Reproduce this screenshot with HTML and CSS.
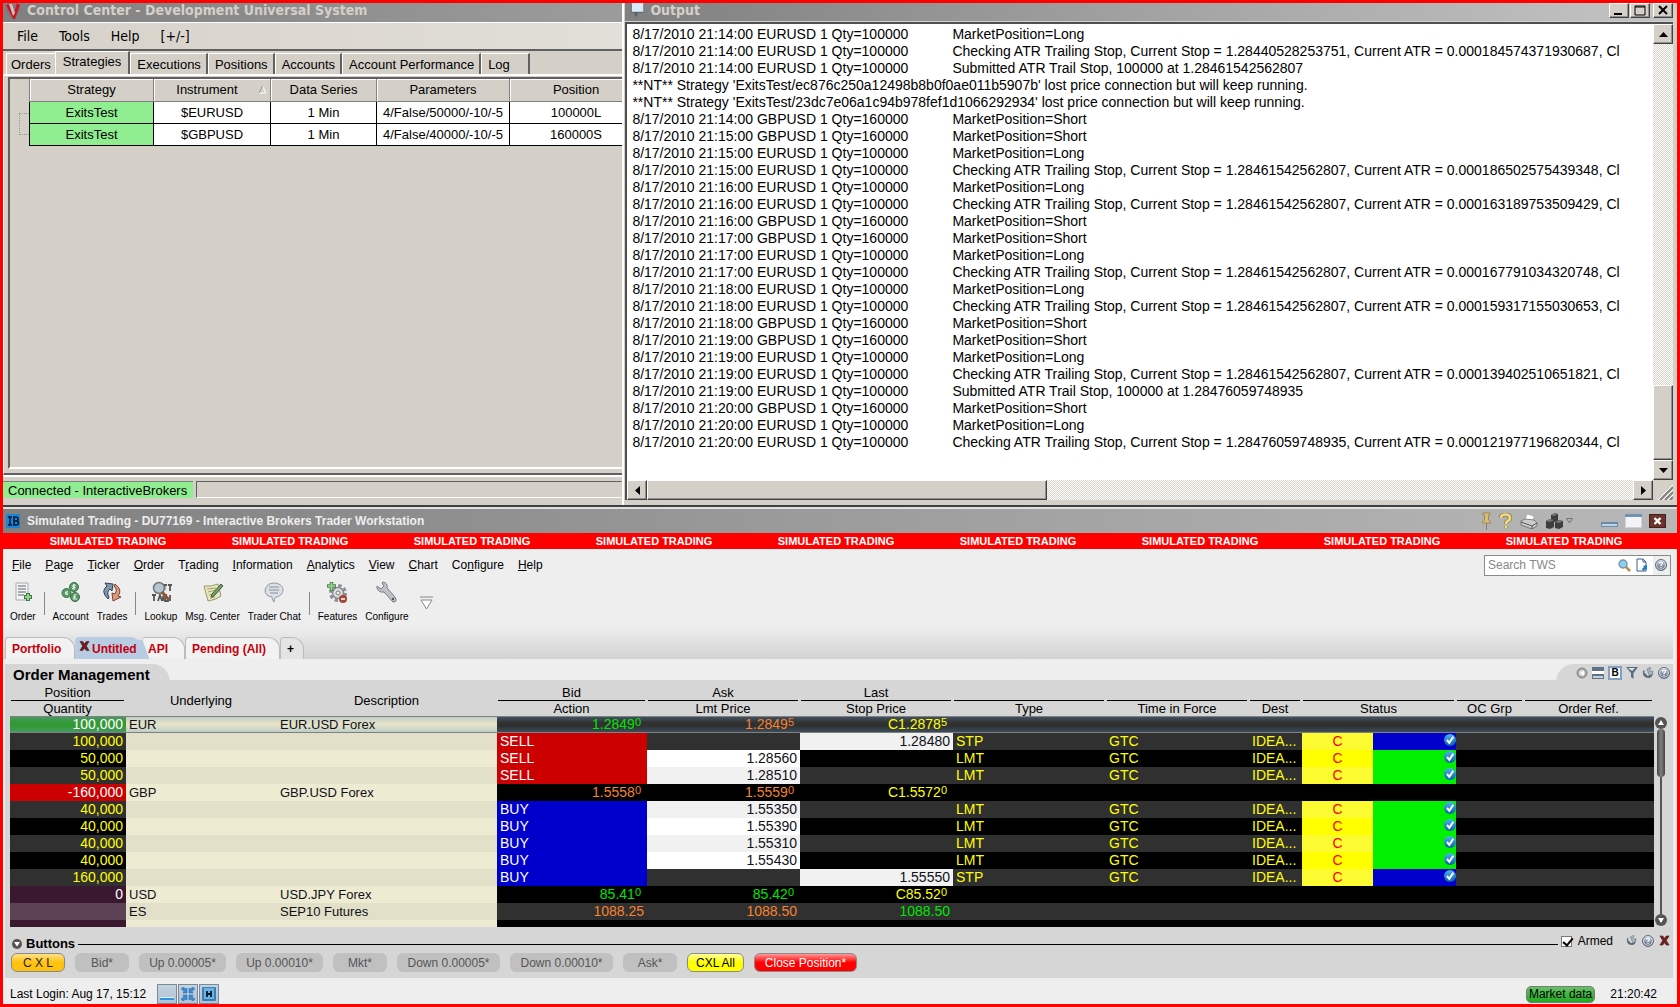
FILE: index.html
```html
<!DOCTYPE html>
<html lang="en">
<head>
  <meta charset="UTF-8">
  <title>Trading Desktop</title>
  <link rel="stylesheet" href="styles.css">
</head>
<body>

  <!-- Shared icons -->
  <svg class="sprite" aria-hidden="true">
    <defs>
      <linearGradient id="checkFill" x1="0" y1="0" x2="0" y2="1"><stop offset="0" stop-color="#4bb4ee"/><stop offset="1" stop-color="#0a5fae"/></linearGradient>
      <linearGradient id="steel" x1="0" y1="0" x2="0" y2="1"><stop offset="0" stop-color="#c6d0da"/><stop offset="1" stop-color="#5d6d80"/></linearGradient>
    </defs>
    <symbol id="check" viewBox="0 0 12 12"><circle cx="6" cy="6" r="6" fill="url(#checkFill)"/><path d="M3 6l2.3 2.8L9.3 2.8" fill="none" stroke="#fff" stroke-width="2"/></symbol>
    <symbol id="help" viewBox="0 0 12 12"><circle cx="6" cy="6" r="5.5" fill="url(#steel)" stroke="#5f6f80"/><circle cx="6" cy="6" r="4.4" fill="none" stroke="#e4eaf0" stroke-width=".7"/><path d="M4.500 4.800q0-1.600 1.500-1.600t1.500 1.400q0 .8-1.500 1.600v.8M6 8v1.300" fill="none" stroke="#fff" stroke-width="1.200"/></symbol>
    <symbol id="wrench" viewBox="0 0 12 12"><path d="M1 4q-1 6 5 7 5 0 5-6L9 8H7L2 3z" fill="#5d6a78"/><path d="M5 2q2-2 4-1L7.500 3l1 1.500L11 4q0 3-2 4-1 .5-2 0z" fill="#aab4be" stroke="#66717d" stroke-width=".6"/><path d="M2.500 4.500l4 4" stroke="#dfe5ea" stroke-width="1.600"/></symbol>
    <symbol id="cross" viewBox="0 0 12 12"><path d="M1 1h3l2 2.500L8 1h3L8 6l3 5H8L6 8.500 4 11H1l3-5z" fill="#6e1f1f" stroke="#4b1616" stroke-width=".6"/></symbol>
  </svg>

  <div class="desktop">

    <!-- Control Center -->
    <section class="control">
      <div class="titleBar">
        <svg width="18" height="16" viewBox="0 0 18 16"><path d="M1 3q3-3 8-3 6 0 7 5-2 9-7 10Q2 12 1 3z" fill="#8b7376"/><path d="M2 2l4-1 4 9 3-10 3 2-5 14H9z" fill="#c81724"/><path d="M5 1h3l3 9-2 3z" fill="#c9c5c5"/></svg>
        <span>Control Center - Development Universal System</span>
      </div>
      <nav class="ccMenu">
        <button>File</button><button>Tools</button><button>Help</button><button>[+/-]</button>
      </nav>
      <div class="ccTabs">
        <button>Orders</button><button class="active">Strategies</button><button>Executions</button><button>Positions</button><button>Accounts</button><button>Account Performance</button><button class="log">Log</button>
      </div>
      <div class="ccPage">
        <div class="ccFrame">
          <div class="tree"></div>
          <table class="strategies">
            <colgroup><col class="w124"><col class="w117"><col class="w106"><col class="w133"><col class="w133"></colgroup>
            <tr><th>Strategy</th><th class="sorted">Instrument<svg class="sort" width="9" height="9" viewBox="0 0 9 9"><path d="M4.500 1L1 8h7z" fill="none" stroke="#fff"/><path d="M4.500 1L1 8" stroke="#888"/></svg></th><th>Data Series</th><th>Parameters</th><th>Position</th></tr>
            <tr><td class="run">ExitsTest</td><td>$EURUSD</td><td>1 Min</td><td>4/False/50000/-10/-5</td><td>100000L</td></tr>
            <tr><td class="run">ExitsTest</td><td>$GBPUSD</td><td>1 Min</td><td>4/False/40000/-10/-5</td><td>160000S</td></tr>
          </table>
        </div>
      </div>
      <div class="ccStatus">
        <span class="connected">Connected - InteractiveBrokers</span>
        <span class="empty"></span>
      </div>
    </section>

    <!-- Output window -->
    <section class="output">
      <div class="titleBar">
        <svg width="15" height="15" viewBox="0 0 17 17"><path d="M1 1h14v10H9l-2 5-2-2V11H1z" fill="#56616f"/><path d="M2 0h13v10H2z" fill="#dbe8f6"/></svg>
        <span>Output</span>
        <div class="winButtons">
          <button aria-label="Minimize"><svg width="12" height="11" viewBox="0 0 12 11"><path d="M1 8h8v2H1z"/></svg></button>
          <button aria-label="Maximize"><svg width="12" height="11" viewBox="0 0 12 11"><path d="M1 1h10v9H1zM1 2h10" fill="none" stroke="#000"/></svg></button>
          <button class="close" aria-label="Close"><svg width="12" height="11" viewBox="0 0 12 11"><path d="M2 1l8 8M10 1l-8 8" stroke="#000" stroke-width="2"/></svg></button>
        </div>
      </div>
      <div class="outBody">
<pre class="logText">8/17/2010 21:14:00 EURUSD 1 Qty=100000	MarketPosition=Long
8/17/2010 21:14:00 EURUSD 1 Qty=100000	Checking ATR Trailing Stop, Current Stop = 1.28440528253751, Current ATR = 0.000184574371930687, Cl
8/17/2010 21:14:00 EURUSD 1 Qty=100000	Submitted ATR Trail Stop, 100000 at 1.28461542562807
**NT** Strategy 'ExitsTest/ec876c250a12498b8b0f0ae011b5907b' lost price connection but will keep running.
**NT** Strategy 'ExitsTest/23dc7e06a1c94b978fef1d1066292934' lost price connection but will keep running.
8/17/2010 21:14:00 GBPUSD 1 Qty=160000	MarketPosition=Short
8/17/2010 21:15:00 GBPUSD 1 Qty=160000	MarketPosition=Short
8/17/2010 21:15:00 EURUSD 1 Qty=100000	MarketPosition=Long
8/17/2010 21:15:00 EURUSD 1 Qty=100000	Checking ATR Trailing Stop, Current Stop = 1.28461542562807, Current ATR = 0.000186502575439348, Cl
8/17/2010 21:16:00 EURUSD 1 Qty=100000	MarketPosition=Long
8/17/2010 21:16:00 EURUSD 1 Qty=100000	Checking ATR Trailing Stop, Current Stop = 1.28461542562807, Current ATR = 0.000163189753509429, Cl
8/17/2010 21:16:00 GBPUSD 1 Qty=160000	MarketPosition=Short
8/17/2010 21:17:00 GBPUSD 1 Qty=160000	MarketPosition=Short
8/17/2010 21:17:00 EURUSD 1 Qty=100000	MarketPosition=Long
8/17/2010 21:17:00 EURUSD 1 Qty=100000	Checking ATR Trailing Stop, Current Stop = 1.28461542562807, Current ATR = 0.000167791034320748, Cl
8/17/2010 21:18:00 EURUSD 1 Qty=100000	MarketPosition=Long
8/17/2010 21:18:00 EURUSD 1 Qty=100000	Checking ATR Trailing Stop, Current Stop = 1.28461542562807, Current ATR = 0.000159317155030653, Cl
8/17/2010 21:18:00 GBPUSD 1 Qty=160000	MarketPosition=Short
8/17/2010 21:19:00 GBPUSD 1 Qty=160000	MarketPosition=Short
8/17/2010 21:19:00 EURUSD 1 Qty=100000	MarketPosition=Long
8/17/2010 21:19:00 EURUSD 1 Qty=100000	Checking ATR Trailing Stop, Current Stop = 1.28461542562807, Current ATR = 0.000139402510651821, Cl
8/17/2010 21:19:00 EURUSD 1 Qty=100000	Submitted ATR Trail Stop, 100000 at 1.28476059748935
8/17/2010 21:20:00 GBPUSD 1 Qty=160000	MarketPosition=Short
8/17/2010 21:20:00 EURUSD 1 Qty=100000	MarketPosition=Long
8/17/2010 21:20:00 EURUSD 1 Qty=100000	Checking ATR Trailing Stop, Current Stop = 1.28476059748935, Current ATR = 0.000121977196820344, Cl</pre>
        <div class="vScroll">
          <button aria-label="Scroll up"><svg width="9" height="5" viewBox="0 0 9 5"><path d="M0 5l4.500-5L9 5z"/></svg></button>
          <div class="thumb"></div>
          <button aria-label="Scroll down"><svg width="9" height="5" viewBox="0 0 9 5"><path d="M0 0h9L4.500 5z"/></svg></button>
        </div>
        <div class="hScroll">
          <button aria-label="Scroll left"><svg width="5" height="9" viewBox="0 0 5 9"><path d="M5 0v9L0 4.500z"/></svg></button>
          <div class="thumb"></div>
          <button class="last" aria-label="Scroll right"><svg width="5" height="9" viewBox="0 0 5 9"><path d="M0 0v9l5-4.500z"/></svg></button>
        </div>
        <div class="grip"><svg width="15" height="15" viewBox="0 0 15 15"><path d="M2 15L15 2M7 15l8-8M12 15l3-3" stroke="#808080" stroke-width="2"/><path d="M0 15L15 0M5 15L15 5M10 15l5-5" stroke="#fff"/></svg></div>
      </div>
    </section>
  </div>

  <!-- Trader Workstation -->
  <main class="tws">
    <div class="twsTitle">
      <svg width="14" height="14" viewBox="0 0 14 14"><rect width="14" height="14" fill="#1b86d8"/><path d="M2 3h4M4 3v8M2 11h4M8 3v8M7 3h3q2 0 2 2t-2 2H8M10 7q2.500 0 2.500 2T10 11H7" fill="none" stroke="#04162e" stroke-width="1.500"/></svg>
      <span>Simulated Trading - DU77169 - Interactive Brokers Trader Workstation</span>
      <div class="twsTools">
        <svg width="9" height="18" viewBox="0 0 9 18"><path d="M1 1h7v2H6.500v5L8.500 10v1H.5v-1l2-2V3H1z" fill="#d8bd72" stroke="#8f7a45" stroke-width=".7"/><path d="M4.500 11v7" stroke="#877f70"/></svg>
        <svg width="13" height="16" viewBox="0 0 13 16"><path d="M2 5q0-3.500 4.500-3.500T11 5q0 2-2.300 3-1.700.8-1.700 3M7 13v2.500" fill="none" stroke="#8c7c3d" stroke-width="4"/><path d="M2 5q0-3.500 4.500-3.500T11 5q0 2-2.300 3-1.700.8-1.700 3M7 13v2.500" fill="none" stroke="#eedc86" stroke-width="2.600"/></svg>
        <svg width="18" height="16" viewBox="0 0 18 16"><path d="M5 7l2-6 7 2-1 5z" fill="#fff" stroke="#999" stroke-width=".6"/><path d="M1 8l4-2 9 1 3 3v3l-5 3-11-4z" fill="#ccc" stroke="#666" stroke-width=".8"/><path d="M1 9l11 4 5-3M12 13v3" fill="none" stroke="#555"/></svg>
        <svg width="17" height="17" viewBox="0 0 17 17"><path d="M5 2l4-2 3 1v7l-4 1-3-1zM0 8l4-2 4 1v7l-4 2-4-1zM9 9l4-2 4 1v6l-4 2-4-1z" fill="#3e3e3e"/><path d="M5 2l3 1 4-2-3-1zM0 8l4 1 4-2-4-1zM9 9l4 1 4-2-4-1z" fill="#777"/></svg>
        <svg class="drop" width="7" height="6" viewBox="0 0 7 6"><path d="M.5.5h6L3.500 5z" fill="none" stroke="#777"/></svg>
      </div>
      <div class="twsWin">
        <button aria-label="Minimize"><svg width="17" height="16" viewBox="0 0 17 16"><rect y="9" width="17" height="5" fill="#6d8ba9"/><rect x="1" y="11" width="15" height="2" fill="#b9d6ef"/></svg></button>
        <button aria-label="Restore"><svg width="17" height="16" viewBox="0 0 17 16"><rect x=".5" y="1.500" width="16" height="13" fill="#f4f4f4" stroke="#c9d3dd"/><rect y="1" width="17" height="3" fill="#6f93b5"/></svg></button>
        <button aria-label="Close"><svg width="17" height="16" viewBox="0 0 17 16"><rect x=".5" y="1.500" width="16" height="13" fill="#6b332b" stroke="#46201b"/><path d="M5.500 5l6 6M11.500 5l-6 6" stroke="#fff" stroke-width="2.400"/></svg></button>
      </div>
    </div>

    <div class="simStrip">
      <span>SIMULATED TRADING</span><span>SIMULATED TRADING</span><span>SIMULATED TRADING</span><span>SIMULATED TRADING</span><span>SIMULATED TRADING</span><span>SIMULATED TRADING</span><span>SIMULATED TRADING</span><span>SIMULATED TRADING</span><span>SIMULATED TRADING</span>
    </div>

    <div class="menuRow">
      <nav class="twsMenu">
        <button><u>F</u>ile</button><button><u>P</u>age</button><button><u>T</u>icker</button><button><u>O</u>rder</button><button>T<u>r</u>ading</button><button><u>I</u>nformation</button><button><u>A</u>nalytics</button><button><u>V</u>iew</button><button><u>C</u>hart</button><button>Co<u>n</u>figure</button><button><u>H</u>elp</button>
      </nav>
      <div class="search">
        <input type="text" placeholder="Search TWS" aria-label="Search TWS">
        <svg width="13" height="13" viewBox="0 0 13 13"><path d="M7 7l5 5" stroke="#c58a4a" stroke-width="2.500"/><circle cx="5" cy="5" r="4" fill="#8ccdf0" stroke="#7893a8" stroke-width="1.300"/></svg>
        <svg width="12" height="14" viewBox="0 0 12 14"><path d="M1 1h6l3 3v9H1z" fill="#fff" stroke="#3b5d92"/><path d="M7 1v3h3" fill="none" stroke="#3b5d92"/><path d="M7 8l4-1v5l-1-1-3 2-1-2 2-2z" fill="#1f78c8"/></svg>
        <span class="searchHelp"><svg width="12" height="12"><use href="#help"/></svg></span>
      </div>
    </div>

    <div class="toolbar">
      <button>
        <svg width="22" height="22" viewBox="0 0 22 22"><path d="M4 2h12v17H4z" fill="#f3f3f3" stroke="#aaa"/><path d="M6 5h8M6 8h8M6 11h8M6 14h6" stroke="#8d949a" stroke-width="1.500"/><path d="M12 16h8M16 12v8" stroke="#3b7a3f" stroke-width="4"/><path d="M13 16h6M16 13v6" stroke="#9cd49b" stroke-width="2"/></svg>
        Order</button>
      <i></i>
      <button>
        <svg width="22" height="22" viewBox="0 0 22 22"><g fill="#5a9a66" stroke="#3c6f48"><circle cx="14" cy="6" r="4.500"/><circle cx="6.500" cy="12" r="4.500"/><circle cx="15" cy="16" r="4.500"/></g><path d="M15.500 4.500q-2-1.500-2.500.2t1.500 1.500-2.500 1.500M14 3v6M8 10.500q-2.500 0-2.500 1.500T8 13.500M5 12h3M16.500 13.500q-2.500-.5-2 2.500l-.8 2h3.500M13 16h3" fill="none" stroke="#e3f1e4" stroke-width="1.100"/></svg>
        Account</button>
      <button>
        <svg width="22" height="22" viewBox="0 0 22 22"><path d="M7 18Q-1 10 6 5L4 2l8 1-1 7-2-2q-4 3-1 8z" fill="#8096ab" stroke="#2f4154" stroke-width="1"/><path d="M14 3q8 6 3 12l3 1-8 4-1-8 3 1q3-4-1-8z" fill="#dc9c7c" stroke="#7e4230" stroke-width="1"/></svg>
        Trades</button>
      <i></i>
      <button>
        <svg width="22" height="22" viewBox="0 0 22 22"><path d="M12 4h5M14.500 4v5M18 4h4M20 4v6M2 14h4M4 14v6M8 20l2-6 2 6M13 15v5M17 14h-2v6h3v-3M20 14v6" stroke="#555" stroke-width="1.800" fill="none"/><circle cx="9" cy="7" r="5.500" fill="#b7c3cd" stroke="#6a7680" stroke-width="1.500"/><path d="M12 11l7 8" stroke="#8e5637" stroke-width="3"/></svg>
        Lookup</button>
      <button>
        <svg width="22" height="22" viewBox="0 0 22 22"><path d="M2 5q7 1 14-2l3 12q-5 4-13 5z" fill="#e9e7b9" stroke="#9a9773"/><path d="M5 8l9-1M6 11l8-2M7 14l8-2M8 17l5-1" stroke="#a49b72"/><path d="M19 3l2 2-9 10-3 1 1-3z" fill="#6fa066" stroke="#4b5c47"/></svg>
        Msg. Center</button>
      <button>
        <svg width="22" height="22" viewBox="0 0 22 22"><path d="M11 2c5 0 9 3 9 7s-4 7-7 7q-2 1-2 5-2-2-2-5-7-1-7-7 2-7 9-7z" fill="#dcdfe5" stroke="#9297a3"/><path d="M6 6h10M6 9h10M7 12h8" stroke="#8c92a0" stroke-width="1.200"/></svg>
        Trader Chat</button>
      <i></i>
      <button>
        <svg width="22" height="22" viewBox="0 0 22 22"><circle cx="12" cy="12" r="7.500" fill="none" stroke="#8c8f96" stroke-width="3" stroke-dasharray="3.400 2.500"/><circle cx="12" cy="12" r="5.500" fill="#dcdde0" stroke="#888b92" stroke-width="1.500"/><circle cx="12" cy="12" r="2" fill="#f4f4f4" stroke="#777"/><path d="M1 5h9M5.500 1v9" stroke="#4c8a4f" stroke-width="3.600"/><path d="M2 5h7M5.500 2v7" stroke="#a3d5a0" stroke-width="1.600"/><circle cx="17" cy="18" r="4" fill="#a2473a"/><path d="M15 18h4" stroke="#fff" stroke-width="1.500"/></svg>
        Features</button>
      <button>
        <svg width="22" height="22" viewBox="0 0 22 22"><path d="M7 1q5 1 4 6l8 9q3 5-2 5L8 11Q3 12 1 7V5l4 3 3-3-2-3z" fill="#bfc3c9" stroke="#777c85"/><circle cx="17" cy="18" r="1.200" fill="#555"/></svg>
        Configure</button>
      <svg class="more" width="13" height="14" viewBox="0 0 13 14"><path d="M0 1h13" stroke="#888"/><path d="M1 4h11l-5.500 9z" fill="#fff" stroke="#888"/></svg>
    </div>

    <div class="pageTabs">
      <button class="first">Portfolio</button>
      <button class="current"><svg width="11" height="12" viewBox="0 0 12 12"><use href="#cross"/></svg>Untitled</button>
      <button class="api">API</button>
      <button class="pending">Pending (All)</button>
      <button class="add">+</button>
    </div>

    <section class="panel">
      <div class="panelHead">
        <h2>Order Management</h2>
        <div class="panelTools">
          <svg width="12" height="12" viewBox="0 0 12 12"><circle cx="6" cy="6" r="5" fill="#a5a5a5" stroke="#858585"/><circle cx="6" cy="6" r="3" fill="#ddd"/><path d="M4 6l4-2.500v5z" fill="#fff"/></svg>
          <svg width="12" height="12" viewBox="0 0 12 12"><path d="M0 0h12v12H0z" fill="#fff"/><path d="M0 0h12v4H0zM0 7h12v5H0z" fill="#5e7288"/><path d="M1 9h10v2H1z" fill="#c5d3e0"/></svg>
          <button class="bold">B</button>
          <svg width="12" height="12" viewBox="0 0 12 12"><path d="M0 0h12L7.500 6v6L5 10V6z" fill="#5a6c80"/><path d="M2 1h7L6 4z" fill="#d7e3ee"/></svg>
          <svg width="12" height="12"><use href="#wrench"/></svg>
          <svg width="12" height="12"><use href="#help"/></svg>
        </div>
      </div>

      <div class="orderArea">
        <table class="orders">
          <colgroup><col class="cQty"><col class="cUnd"><col class="cDesc"><col class="cBid"><col class="cPrice"><col class="cPrice"><col class="cPrice"><col class="cTif"><col class="cDest"><col class="cStat"><col class="cFill"><col class="cOc"><col></colgroup>
          <thead>
            <tr>
              <th><span>Position</span>Quantity</th>
              <th class="single">Underlying</th>
              <th class="single">Description</th>
              <th><span>Bid</span>Action</th>
              <th><span>Ask</span>Lmt Price</th>
              <th><span>Last</span>Stop Price</th>
              <th><span></span>Type</th>
              <th><span></span>Time in Force</th>
              <th><span></span>Dest</th>
              <th colspan="2"><span></span>Status</th>
              <th><span></span>OC Grp</th>
              <th><span></span>Order Ref.</th>
            </tr>
          </thead>
          <tbody>
            <tr class="selected"><td class="qty long">100,000</td><td class="name">EUR</td><td class="name">EUR.USD Forex</td><td class="num up">1.2849<sup>0</sup></td><td class="num down">1.2849<sup>5</sup></td><td class="num last">C1.2878<sup>5</sup></td><td></td><td></td><td></td><td></td><td></td><td></td><td></td></tr>
            <tr><td class="qty">100,000</td><td class="name"></td><td class="name"></td><td class="sell">SELL</td><td></td><td class="price">1.28480</td><td>STP</td><td>GTC</td><td>IDEA...</td><td class="cancel">C</td><td class="sent"><svg width="12" height="12"><use href="#check"/></svg></td><td></td><td></td></tr>
            <tr><td class="qty">50,000</td><td class="name"></td><td class="name"></td><td class="sell">SELL</td><td class="price">1.28560</td><td></td><td>LMT</td><td>GTC</td><td>IDEA...</td><td class="cancel">C</td><td class="working"><svg width="12" height="12"><use href="#check"/></svg></td><td></td><td></td></tr>
            <tr><td class="qty">50,000</td><td class="name"></td><td class="name"></td><td class="sell">SELL</td><td class="price">1.28510</td><td></td><td>LMT</td><td>GTC</td><td>IDEA...</td><td class="cancel">C</td><td class="working"><svg width="12" height="12"><use href="#check"/></svg></td><td></td><td></td></tr>
            <tr><td class="qty short">-160,000</td><td class="name">GBP</td><td class="name">GBP.USD Forex</td><td class="num down">1.5558<sup>0</sup></td><td class="num down">1.5559<sup>0</sup></td><td class="num last">C1.5572<sup>0</sup></td><td></td><td></td><td></td><td></td><td></td><td></td><td></td></tr>
            <tr><td class="qty">40,000</td><td class="name"></td><td class="name"></td><td class="buy">BUY</td><td class="price">1.55350</td><td></td><td>LMT</td><td>GTC</td><td>IDEA...</td><td class="cancel">C</td><td class="working"><svg width="12" height="12"><use href="#check"/></svg></td><td></td><td></td></tr>
            <tr><td class="qty">40,000</td><td class="name"></td><td class="name"></td><td class="buy">BUY</td><td class="price">1.55390</td><td></td><td>LMT</td><td>GTC</td><td>IDEA...</td><td class="cancel">C</td><td class="working"><svg width="12" height="12"><use href="#check"/></svg></td><td></td><td></td></tr>
            <tr><td class="qty">40,000</td><td class="name"></td><td class="name"></td><td class="buy">BUY</td><td class="price">1.55310</td><td></td><td>LMT</td><td>GTC</td><td>IDEA...</td><td class="cancel">C</td><td class="working"><svg width="12" height="12"><use href="#check"/></svg></td><td></td><td></td></tr>
            <tr><td class="qty">40,000</td><td class="name"></td><td class="name"></td><td class="buy">BUY</td><td class="price">1.55430</td><td></td><td>LMT</td><td>GTC</td><td>IDEA...</td><td class="cancel">C</td><td class="working"><svg width="12" height="12"><use href="#check"/></svg></td><td></td><td></td></tr>
            <tr><td class="qty">160,000</td><td class="name"></td><td class="name"></td><td class="buy">BUY</td><td></td><td class="price">1.55550</td><td>STP</td><td>GTC</td><td>IDEA...</td><td class="cancel">C</td><td class="sent"><svg width="12" height="12"><use href="#check"/></svg></td><td></td><td></td></tr>
            <tr><td class="qty flat">0</td><td class="name">USD</td><td class="name">USD.JPY Forex</td><td class="num up">85.41<sup>0</sup></td><td class="num up">85.42<sup>0</sup></td><td class="num last">C85.52<sup>0</sup></td><td></td><td></td><td></td><td></td><td></td><td></td><td></td></tr>
            <tr><td class="qty flat"></td><td class="name">ES</td><td class="name">SEP10 Futures</td><td class="num down">1088.25</td><td class="num down">1088.50</td><td class="num up">1088.50</td><td></td><td></td><td></td><td></td><td></td><td></td><td></td></tr>
            <tr class="cut"><td class="qty flat"></td><td class="name"></td><td class="name"></td><td></td><td></td><td></td><td></td><td></td><td></td><td></td><td></td><td></td><td></td></tr>
          </tbody>
        </table>
        <div class="orderScroll">
          <svg width="12" height="12" viewBox="0 0 12 12"><circle cx="6" cy="6" r="6" fill="#555"/><path d="M6 3l3 5H3z" fill="#fff"/></svg>
          <div class="track"><div class="thumb"></div></div>
          <svg width="12" height="12" viewBox="0 0 12 12"><circle cx="6" cy="6" r="6" fill="#555"/><path d="M6 9l3-5H3z" fill="#fff"/></svg>
        </div>
      </div>

      <div class="buttonsHead">
        <svg width="10" height="10" viewBox="0 0 10 10"><circle cx="5" cy="5" r="5" fill="#555"/><path d="M5 7.500L8 3H2z" fill="#fff"/></svg>
        <h3>Buttons</h3>
        <div class="rule"></div>
        <label for="armed"><input type="checkbox" id="armed" checked>Armed</label>
        <div class="headIcons">
          <svg width="11" height="11"><use href="#wrench"/></svg>
          <svg width="12" height="12"><use href="#help"/></svg>
          <svg width="11" height="11"><use href="#cross"/></svg>
        </div>
      </div>
      <div class="hotButtons">
        <button class="short cxl">C X L</button>
        <button class="short">Bid*</button>
        <button class="mid">Up 0.00005*</button>
        <button class="mid">Up 0.00010*</button>
        <button class="short">Mkt*</button>
        <button class="wide">Down 0.00005*</button>
        <button class="wide">Down 0.00010*</button>
        <button class="short">Ask*</button>
        <button class="cxlAll">CXL All</button>
        <button class="wide closePos">Close Position*</button>
      </div>
    </section>

    <footer>
      <span>Last Login: Aug 17, 15:12</span>
      <div class="footIcons">
        <button aria-label="Minimize all"><svg width="14" height="14" viewBox="0 0 14 14"><path d="M0 10h14v3H0z" fill="#2f93dc"/><path d="M0 10h14v1H0z" fill="#d8efff"/></svg></button>
        <button aria-label="Arrange"><svg width="14" height="14" viewBox="0 0 14 14"><path d="M0 2l2-2 3 2 1-1v5H2l1-2zM14 2l-2-2-3 2-1-1v5h4l-1-2zM0 12l2 2 3-2 1 1V8H2l1 2zM14 12l-2 2-3-2-1 1V8h4l-1 2z" fill="#3a8ed6" stroke="#2a6299" stroke-width=".5"/></svg></button>
        <button aria-label="Hotkeys"><svg width="14" height="14" viewBox="0 0 14 14"><rect width="14" height="14" rx="1" fill="#3c7fb8"/><rect x="2" y="1" width="10" height="11" fill="#6db3e0"/><path d="M5 4v6M9 4v6M5 7h4" stroke="#04182c" stroke-width="1.800"/></svg></button>
      </div>
      <span class="market">Market data</span>
      <span>21:20:42</span>
    </footer>
  </main>

</body>
</html>
```

FILE: styles.css
```css
* {
  box-sizing: border-box;
}

body {
  margin: 0;
  min-height: 100vh;
  border: 3px solid #ff0000;
  background: #eeeeee;
  font-family: "Liberation Sans", Arial, sans-serif;
  font-size: 13px;
  color: #000;
  display: flex;
  flex-direction: column;
  overflow: hidden;
}

button {
  padding: 0;
  border: none;
  background: none;
  font: inherit;
  color: inherit;
}

svg {
  display: block;
  flex: none;
}

.sprite {
  position: absolute;
  width: 0;
  height: 0;
}

/* top half: two classic windows */
.desktop {
  display: grid;
  grid-template-columns: 37fr 63fr;
  background: #d4d0c8;
  border-bottom: 2px solid #404040;
}

.titleBar {
  display: flex;
  align-items: center;
  gap: 5px;
  height: 19px;
  padding-bottom: 4px;
  font-family: "DejaVu Sans Condensed", Tahoma, sans-serif;
  font-weight: bold;
  font-size: 14px;
  line-height: 15px;
  color: #d4d0c8;
  white-space: nowrap;
}

.control {
  min-width: 0;
  overflow: hidden;
  display: flex;
  flex-direction: column;
}

.control .titleBar {
  padding-left: 1px;
  background: linear-gradient(90deg, #808080, #9c9c9c);
}

.ccMenu {
  display: flex;
  gap: 21px;
  height: 29px;
  padding-left: 14px;
  border-top: 1px solid #fff;
  border-bottom: 2px solid #606060;
  background: linear-gradient(90deg, #d6d2ca, #e2dfd8);
  font-family: "DejaVu Sans Condensed", Tahoma, sans-serif;
  font-size: 14px;
}

.ccTabs {
  display: flex;
  align-items: flex-end;
  height: 23px;
  padding-left: 3px;
}

.ccTabs button {
  height: 21px;
  padding: 0 5px 0 6px;
  border-top: 1px solid #fff;
  border-left: 1px solid #fff;
  border-right: 2px solid #606060;
  white-space: nowrap;
}

.ccTabs .active {
  height: 23px;
  padding: 0 7px 3px;
}

.ccTabs button:first-child {
  padding: 0 4px;
  border-right: none;
}

.ccTabs .log {
  padding-right: 18px;
}

.ccPage {
  flex: 1;
  padding: 1px 0 4px 4px;
  border-top: 2px solid #fff;
  border-left: 1px solid #fff;
  border-bottom: 2px solid #606060;
}

.ccFrame {
  display: flex;
  height: 100%;
  border-top: 2px solid #606060;
  border-left: 2px solid #606060;
  border-bottom: 2px solid #fff;
}

.tree {
  flex: none;
  align-self: flex-start;
  width: 10px;
  height: 22px;
  margin: 34px 0 0 9px;
  border: 1px dotted #999;
  border-right: none;
}

.strategies {
  flex: none;
  align-self: flex-start;
  width: 613px;
  table-layout: fixed;
  border-collapse: collapse;
  text-align: center;
}

.w124 { width: 124px; }
.w117 { width: 117px; }
.w106 { width: 106px; }
.w133 { width: 133px; }

.strategies th,
.strategies td {
  height: 22px;
  padding: 0;
  border: 1px solid #000;
  background: #fff;
}

.strategies th {
  position: relative;
  border-color: #808080;
  border-top: none;
  background: #d4d0c8;
  font-weight: normal;
  box-shadow: inset 1px 1px 0 #fff;
}

.strategies .sorted {
  padding-right: 10px;
}

.sort {
  position: absolute;
  right: 3px;
  top: 6px;
}

.strategies .run {
  background: #90ee90;
}

.ccStatus {
  display: flex;
  gap: 3px;
  height: 30px;
  padding: 4px 0 7px;
  border-top: 2px solid #fff;
}

.connected {
  padding: 0 6px 0 5px;
  background: #90ee90;
  border-top: 1px solid #808080;
  line-height: 17px;
}

.empty {
  flex: 1;
  border: 1px solid;
  border-color: #606060 transparent #fff #606060;
}

.output {
  min-width: 0;
  border-left: 1px solid #fff;
  padding: 0 4px 5px 2px;
  box-shadow: inset 1px 0 0 #fff, inset 2px 0 0 #d4d0c8;
}

.output .titleBar {
  height: 18px;
  margin: 0 0 1px;
  padding: 0 0 3px 5px;
  background: linear-gradient(90deg, #808080, #c4c4c4);
}

.winButtons {
  display: flex;
  gap: 1px;
  margin-left: auto;
}

.winButtons button,
.vScroll button,
.hScroll button,
.thumb {
  background: #d4d0c8;
  border: 1px solid;
  border-color: #fff #404040 #404040 #fff;
  box-shadow: inset -1px -1px 0 #909090;
  display: flex;
  align-items: center;
  justify-content: center;
}

.winButtons button {
  width: 20px;
  height: 15px;
}

.winButtons .close {
  margin-left: 2px;
}

.outBody {
  display: grid;
  grid-template-columns: minmax(0, 1fr) 20px;
  grid-template-rows: 456px 20px;
  border-top: 2px solid #505050;
  border-left: 2px solid #505050;
}

.logText {
  margin: 0;
  padding: 2px 0 0 5px;
  background: #fff;
  font-family: "Liberation Sans", Arial, sans-serif;
  font-size: 14px;
  line-height: 17px;
  tab-size: 320px;
  overflow: hidden;
}

.vScroll,
.hScroll {
  display: flex;
  background: repeating-conic-gradient(#fff 0 25%, #d8d4cc 0 50%) 0 0 / 2px 2px;
}

.vScroll {
  flex-direction: column;
}

.vScroll button,
.hScroll button {
  flex: none;
  width: 20px;
  height: 20px;
}

.vScroll .thumb {
  height: 75px;
  margin-top: auto;
}

.hScroll .thumb {
  width: 39%;
}

.hScroll .last {
  margin-left: auto;
}

.grip {
  display: flex;
  align-items: flex-end;
  justify-content: flex-end;
}

/* trader workstation */
.tws {
  flex: 1;
  display: flex;
  flex-direction: column;
  font-size: 12px;
}

.twsTitle {
  display: flex;
  align-items: center;
  gap: 7px;
  height: 26px;
  padding: 0 11px 0 3px;
  border-top: 2px solid #e0e0e0;
  background: linear-gradient(90deg, #808080, #b8b8b8);
  color: #eee;
  font-weight: bold;
}

.twsTools {
  display: flex;
  align-items: center;
  gap: 8px;
  margin-left: auto;
}

.twsTools .drop {
  margin-left: -5px;
}

.twsWin {
  display: flex;
  gap: 7px;
  margin-left: 21px;
}

.simStrip {
  display: flex;
  justify-content: space-around;
  padding: 0 22px 0 14px;
  background: #ff0000;
  color: #fff;
  font-weight: bold;
  font-size: 11px;
  line-height: 16px;
  white-space: nowrap;
}

.menuRow {
  display: flex;
  justify-content: space-between;
  align-items: center;
  height: 32px;
  padding: 0 6px 0 9px;
}

.twsMenu {
  display: flex;
  gap: 14px;
}

.search {
  display: flex;
  align-items: center;
  gap: 5px;
  width: 187px;
  height: 21px;
  border: 1px solid #8a8a8a;
  background: #fff;
}

.search input {
  flex: 1;
  min-width: 0;
  padding: 0 3px;
  border: none;
  outline: none;
  background: none;
  font: inherit;
}

.search input::placeholder {
  color: #888;
}

.searchHelp {
  display: flex;
  align-items: center;
  height: 100%;
  padding: 0 3px 0 2px;
  background: #eee;
}

.toolbar {
  display: flex;
  gap: 8px;
  height: 46px;
  padding-left: 7px;
}

.toolbar button {
  display: flex;
  flex-direction: column;
  align-items: center;
  gap: 6px;
  font-size: 10px;
  line-height: 16px;
  white-space: nowrap;
}

.toolbar i {
  width: 1px;
  height: 23px;
  margin-top: 11px;
  background: #888;
}

.toolbar .more {
  margin: 15px 0 0 3px;
}

.pageTabs {
  display: flex;
  align-items: flex-end;
  height: 32px;
  padding-left: 2px;
  margin-right: 4px;
  background: linear-gradient(#eee, #d2d2d2);
  color: #c4000c;
  font-weight: bold;
}

.pageTabs button {
  display: flex;
  align-items: center;
  height: 22px;
  padding: 0 8px 0 6px;
  border: 1px solid #bbb;
  border-bottom: none;
  border-radius: 4px 12px 0 0;
  background: #f2f2f2;
  white-space: nowrap;
}

.pageTabs .first {
  width: 70px;
}

.pageTabs .current {
  position: relative;
  z-index: 1;
  width: 67px;
  gap: 2px;
  padding: 0 0 0 3px;
  border-color: #b8cce4;
  background: #b8cce4;
}

.pageTabs .current::after {
  content: "";
  position: absolute;
  right: -5px;
  top: 2px;
  width: 12px;
  height: 19px;
  background: #b8cce4;
  transform: skewX(20deg);
  z-index: -1;
}

.pageTabs .current svg {
  margin-bottom: 6px;
}

.pageTabs .api {
  width: 43px;
  border-left: none;
}

.pageTabs .pending {
  width: 95px;
}

.pageTabs .add {
  width: 24px;
  background: #e4e4e4;
  color: #000;
}

.panel {
  margin: 5px 4px 0 2px;
  background: linear-gradient(#eeeeee 16px, #d6d6d6 16px);
}

.panelHead {
  display: flex;
  justify-content: space-between;
  height: 16px;
}

.panelHead h2 {
  margin: 0;
  height: 18px;
  padding: 0 20px 0 8px;
  background: #d6d6d6;
  border-radius: 0 20px 0 0;
  font-size: 15px;
  line-height: 22px;
}

.panelTools {
  display: flex;
  align-items: center;
  gap: 4px;
  height: 18px;
  padding: 0 3px 0 20px;
  background: #d6d6d6;
  border-radius: 20px 0 0 0;
}

.panelTools .bold {
  width: 14px;
  height: 14px;
  border: 2px solid #7fa0c8;
  background: #fff;
  font-size: 10px;
  font-weight: bold;
  line-height: 10px;
}

.orderArea {
  display: flex;
  padding: 4px 0 9px 5px;
}

.orders {
  flex: 1;
  table-layout: fixed;
  border-collapse: collapse;
  min-width: 0;
}

.cQty { width: 116px; }
.cUnd { width: 151px; }
.cDesc { width: 220px; }
.cBid { width: 150px; }
.cPrice { width: 153px; }
.cTif { width: 143px; }
.cDest { width: 53px; }
.cStat { width: 71px; }
.cFill { width: 83px; }
.cOc { width: 68px; }

.orders th {
  height: 32px;
  padding: 0 2px 0 1px;
  font-size: 13px;
  font-weight: normal;
  line-height: 15px;
  vertical-align: bottom;
}

.orders th span {
  display: block;
  height: 16px;
  border-bottom: 1px solid #000;
}

.orders th.single {
  vertical-align: middle;
}

.orders td {
  height: 17px;
  padding: 0 3px;
  background: #000;
  color: #ffff00;
  font-size: 14px;
  line-height: 17px;
  overflow: hidden;
  white-space: nowrap;
}

.orders tr:nth-child(even) td {
  background: #303030;
}

.orders .qty,
.orders .num,
.orders .price {
  text-align: right;
}

.orders td.name,
.orders tr:nth-child(even) td.name {
  background: #eeebd3;
  color: #101018;
  font-size: 13px;
}

.orders tr:nth-child(even) td.name {
  background: #e2e0c8;
}

.orders .num:has(sup) {
  padding-right: 6px;
}

.orders sup {
  font-size: 11px;
  line-height: 0;
  vertical-align: 3px;
}

.orders .up { color: #00e600; }
.orders .down { color: #f58230; }

.orders td.long,
.orders td.short,
.orders td.flat {
  color: #fff;
}

.orders td.short { background: #cc0000; }
.orders td.flat { background: #3a1830; }
.orders tr:nth-child(even) td.flat { background: #5d4256; }

.orders tr td.sell,
.orders tr:nth-child(even) td.sell {
  background: #cc0000;
  color: #fff;
}

.orders tr td.buy,
.orders tr:nth-child(even) td.buy {
  background: #0000cc;
  color: #fff;
}

.orders td.price {
  background: #fff;
  color: #101018;
}

.orders tr:nth-child(even) td.price {
  background: #f1f1f1;
}

.orders td.cancel {
  background: #ffff00;
  color: #ff0000;
  text-align: center;
}

.orders tr:nth-child(even) td.cancel {
  background: #fcfa30;
}

.orders tr td.working,
.orders tr:nth-child(even) td.working {
  background: #00f000;
  padding-right: 0;
}

.orders tr td.sent,
.orders tr:nth-child(even) td.sent {
  background: #0000cc;
  padding-right: 0;
}

.orders td svg {
  margin: 0 0 3px auto;
}

/* glow on the selected row */
.orders .selected td {
  background: linear-gradient(#44586a, #303030 40%, #303030 60%, #3d5264);
  box-shadow: inset 0 1px 0 #808080, inset 0 -1px 0 #808080;
}

.orders .selected td.name {
  background: linear-gradient(#b9cbc9, #e4e2c8 45%, #e4e2c8 55%, #b9cbc9);
}

.orders .selected td.long {
  background: linear-gradient(#4a9a6c, #339933 40%, #339933 60%, #4a9a6c);
}

.orders .cut td {
  height: 7px;
}

.orderScroll {
  display: flex;
  flex-direction: column;
  align-items: center;
  width: 19px;
  padding: 33px 6px 1px 0;
}

.track {
  flex: 1;
  width: 2px;
  background: #555;
  display: flex;
  justify-content: center;
}

.track .thumb {
  flex: none;
  width: 8px;
  height: 48px;
  border: none;
  border-radius: 4px;
  box-shadow: none;
  background: linear-gradient(90deg, #444, #808080, #444);
}

.buttonsHead {
  display: flex;
  align-items: center;
  height: 16px;
  padding: 0 3px 0 7px;
}

.buttonsHead h3 {
  margin: 0 3px 0 4px;
  font-size: 13px;
  line-height: 16px;
}

.rule {
  flex: 1;
  height: 1px;
  background: #000;
}

.buttonsHead label {
  display: flex;
  align-items: center;
  gap: 6px;
  margin: 0 13px 6px 3px;
}

.buttonsHead input {
  appearance: none;
  width: 11px;
  height: 11px;
  margin: 0;
  border: 1px solid #777;
  background: #fff;
  position: relative;
}

.buttonsHead input:checked::after {
  content: "";
  position: absolute;
  left: 3px;
  top: -1px;
  width: 4px;
  height: 8px;
  border: solid #000;
  border-width: 0 2px 2px 0;
  transform: rotate(40deg);
}

.headIcons {
  display: flex;
  gap: 5px;
  margin-bottom: 6px;
}

.hotButtons {
  display: flex;
  gap: 10px;
  padding: 1px 0 6px 6px;
}

.hotButtons button {
  height: 19px;
  width: 57px;
  border-radius: 6px;
  background: #c0c0c0;
  color: #555;
}

.hotButtons .short { width: 54px; }
.hotButtons .mid { width: 87px; }
.hotButtons .wide { width: 103px; }

.hotButtons .cxl {
  border: 1px solid #8a8a8a;
  background: linear-gradient(#ffe08a, #ffc20e 50%, #ffc20e);
  color: #222;
}

.hotButtons .cxlAll {
  border: 1px solid #8a8a8a;
  background: linear-gradient(#ffffa0, #ffff00 50%);
  color: #000;
}

.hotButtons .closePos {
  border: 1px solid #8a8a8a;
  background: linear-gradient(#ff9a9a, #ff0000 50%);
  color: #fff;
}

footer {
  display: flex;
  align-items: center;
  height: 26px;
  padding: 6px 20px 0 7px;
}

.footIcons {
  display: flex;
  gap: 1px;
  margin: 0 auto 0 11px;
}

.footIcons button {
  display: flex;
  align-items: center;
  justify-content: center;
  width: 20px;
  height: 20px;
  border: 1px solid #7b8896;
  background: linear-gradient(#c4d2e0, #b0c2d6);
}

.market {
  margin-right: 15px;
  padding: 0 2px;
  border: 1px solid #7a7a7a;
  border-radius: 5px;
  background: linear-gradient(#66c266, #22a822);
  line-height: 15px;
}
```
